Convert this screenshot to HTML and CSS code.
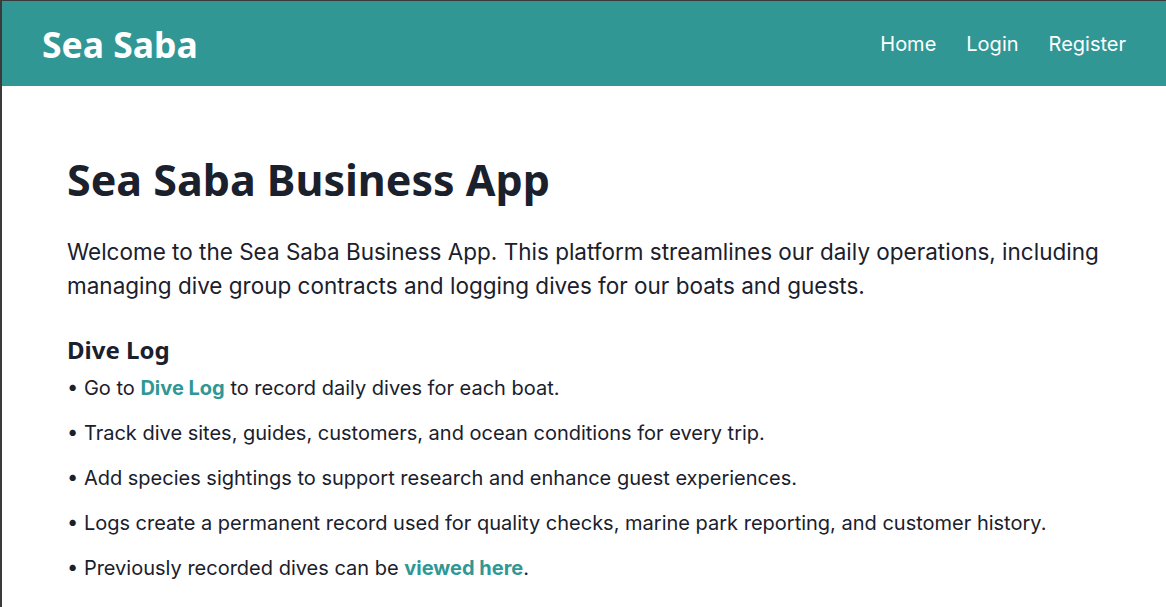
FILE: index.html
```html
<!DOCTYPE html>
<html lang="en">
<head>
<meta charset="utf-8">
<title>Sea Saba Business App</title>
<link rel="stylesheet" href="styles.css">
</head>
<body>
<div class="frame">
  <header class="topbar">
    <a class="brand" href="#">Sea Saba</a>
    <nav class="nav">
      <a href="#">Home</a>
      <a href="#">Login</a>
      <a href="#">Register</a>
    </nav>
  </header>
  <main class="content">
    <h1 class="title">Sea Saba Business App</h1>
    <p class="intro">Welcome to the Sea Saba Business App. This platform streamlines our daily operations, including managing dive group contracts and logging dives for our boats and guests.</p>
    <h2 class="section-title">Dive Log</h2>
    <p class="item">• Go to <a class="link" href="#">Dive Log</a> to record daily dives for each boat.</p>
    <p class="item">• Track dive sites, guides, customers, and ocean conditions for every trip.</p>
    <p class="item">• Add species sightings to support research and enhance guest experiences.</p>
    <p class="item">• Logs create a permanent record used for quality checks, marine park reporting, and customer history.</p>
    <p class="item">• Previously recorded dives can be <a class="link" href="#">viewed here</a>.</p>
  </main>
</div>
</body>
</html>
```

FILE: styles.css
```css
html, body {
  margin: 0;
  padding: 0;
  height: 100%;
  background: #ffffff;
}
.frame {
  min-height: 100%;
  box-sizing: border-box;
  border-top: 1px solid #3a3a3a;
  border-left: 2px solid #3a3a3a;
  font-family: Inter, "Liberation Sans", sans-serif;
  color: #1a202c;
}
.topbar {
  height: 85px;
  background: #319795;
  display: flex;
  align-items: center;
  justify-content: space-between;
  padding: 0 40px;
}
.brand {
  font-family: "Noto Sans", "Open Sans", sans-serif;
  font-weight: 700;
  font-size: 35.5px;
  color: #ffffff;
  text-decoration: none;
}
.nav {
  display: flex;
  gap: 30px;
}
.nav a {
  color: #ffffff;
  text-decoration: none;
  font-size: 20px;
}
.content {
  padding: 68px 65px 0 65px;
}
.title {
  font-family: "Noto Sans", "Open Sans", sans-serif;
  font-weight: 700;
  font-size: 43px;
  margin: 0 0 29px 0;
  line-height: 1.2;
}
.intro {
  font-size: 22.5px;
  line-height: 34px;
  margin: 0 0 31px 0;
}
.section-title {
  font-family: "Noto Sans", "Open Sans", sans-serif;
  font-weight: 700;
  font-size: 24px;
  margin: 0 0 9px 0;
  line-height: 1.3;
}
.item {
  font-size: 20px;
  line-height: 29px;
  margin: 0 0 16px 0;
}
.link {
  color: #319795;
  font-weight: 700;
  text-decoration: none;
}
```
